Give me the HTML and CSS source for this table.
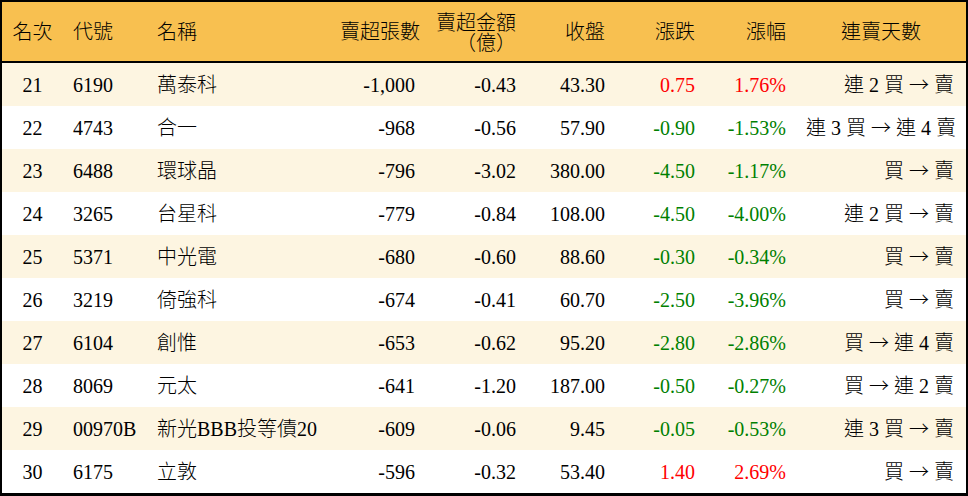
FILE: index.html
```html
<!DOCTYPE html>
<html lang="zh-Hant">
<head>
<meta charset="utf-8">
<link rel="stylesheet" href="styles.css">
</head>
<body>
<div class="table">
  <div class="row head">
    <div class="c center">名次</div>
    <div class="c">代號</div>
    <div class="c">名稱</div>
    <div class="c right">賣超張數</div>
    <div class="c right two">賣超金額<br>（億）</div>
    <div class="c right">收盤</div>
    <div class="c right">漲跌</div>
    <div class="c right">漲幅</div>
    <div class="c center">連賣天數</div>
  </div>
  <div class="row alt">
    <div class="c center">21</div><div class="c">6190</div><div class="c">萬泰科</div>
    <div class="c right">-1,000</div><div class="c right">-0.43</div><div class="c right">43.30</div>
    <div class="c right up">0.75</div><div class="c right up">1.76%</div>
    <div class="c right days">連 2 買 <span class="arrow">→</span> 賣</div>
  </div>
  <div class="row">
    <div class="c center">22</div><div class="c">4743</div><div class="c">合一</div>
    <div class="c right">-968</div><div class="c right">-0.56</div><div class="c right">57.90</div>
    <div class="c right down">-0.90</div><div class="c right down">-1.53%</div>
    <div class="c right days">連 3 買 <span class="arrow">→</span> 連 4 賣</div>
  </div>
  <div class="row alt">
    <div class="c center">23</div><div class="c">6488</div><div class="c">環球晶</div>
    <div class="c right">-796</div><div class="c right">-3.02</div><div class="c right">380.00</div>
    <div class="c right down">-4.50</div><div class="c right down">-1.17%</div>
    <div class="c right days">買 <span class="arrow">→</span> 賣</div>
  </div>
  <div class="row">
    <div class="c center">24</div><div class="c">3265</div><div class="c">台星科</div>
    <div class="c right">-779</div><div class="c right">-0.84</div><div class="c right">108.00</div>
    <div class="c right down">-4.50</div><div class="c right down">-4.00%</div>
    <div class="c right days">連 2 買 <span class="arrow">→</span> 賣</div>
  </div>
  <div class="row alt">
    <div class="c center">25</div><div class="c">5371</div><div class="c">中光電</div>
    <div class="c right">-680</div><div class="c right">-0.60</div><div class="c right">88.60</div>
    <div class="c right down">-0.30</div><div class="c right down">-0.34%</div>
    <div class="c right days">買 <span class="arrow">→</span> 賣</div>
  </div>
  <div class="row">
    <div class="c center">26</div><div class="c">3219</div><div class="c">倚強科</div>
    <div class="c right">-674</div><div class="c right">-0.41</div><div class="c right">60.70</div>
    <div class="c right down">-2.50</div><div class="c right down">-3.96%</div>
    <div class="c right days">買 <span class="arrow">→</span> 賣</div>
  </div>
  <div class="row alt">
    <div class="c center">27</div><div class="c">6104</div><div class="c">創惟</div>
    <div class="c right">-653</div><div class="c right">-0.62</div><div class="c right">95.20</div>
    <div class="c right down">-2.80</div><div class="c right down">-2.86%</div>
    <div class="c right days">買 <span class="arrow">→</span> 連 4 賣</div>
  </div>
  <div class="row">
    <div class="c center">28</div><div class="c">8069</div><div class="c">元太</div>
    <div class="c right">-641</div><div class="c right">-1.20</div><div class="c right">187.00</div>
    <div class="c right down">-0.50</div><div class="c right down">-0.27%</div>
    <div class="c right days">買 <span class="arrow">→</span> 連 2 賣</div>
  </div>
  <div class="row alt">
    <div class="c center">29</div><div class="c">00970B</div><div class="c">新光BBB投等債20</div>
    <div class="c right">-609</div><div class="c right">-0.06</div><div class="c right">9.45</div>
    <div class="c right down">-0.05</div><div class="c right down">-0.53%</div>
    <div class="c right days">連 3 買 <span class="arrow">→</span> 賣</div>
  </div>
  <div class="row">
    <div class="c center">30</div><div class="c">6175</div><div class="c">立敦</div>
    <div class="c right">-596</div><div class="c right">-0.32</div><div class="c right">53.40</div>
    <div class="c right up">1.40</div><div class="c right up">2.69%</div>
    <div class="c right days">買 <span class="arrow">→</span> 賣</div>
  </div>
</div>
</body>
</html>
```
FILE: styles.css
```css
html, body {
  margin: 0;
  padding: 0;
  background: #ffffff;
}
.table {
  width: 968px;
  box-sizing: border-box;
  border: 2px solid #000;
  border-bottom-width: 3px;
  font-family: "Liberation Serif", "Noto Sans CJK TC", serif;
  font-size: 20px;
  font-weight: 300;
  color: #000;
}
.row {
  display: grid;
  grid-template-columns: 61px 84px 183px 95px 101px 89px 90px 91px 170px;
  height: 43px;
  align-items: center;
  background: #ffffff;
}
.row.alt {
  background: #fdf5e1;
}
.row.head {
  height: 59px;
  background: #f8c050;
  border-bottom: 2px solid #000;
}
.c {
  padding: 0 10px;
  white-space: nowrap;
  line-height: 22px;
}
.center {
  text-align: center;
  padding: 0;
}
.right {
  text-align: right;
}
.two {
  line-height: 20px;
  padding-top: 2px;
  text-spacing-trim: space-all;
}
.days {
  padding-right: 12px;
}
.arrow {
  font-family: "Noto Sans CJK TC", sans-serif;
  font-weight: 300;
}
.up {
  color: #ff0000;
}
.down {
  color: #008000;
}
```
